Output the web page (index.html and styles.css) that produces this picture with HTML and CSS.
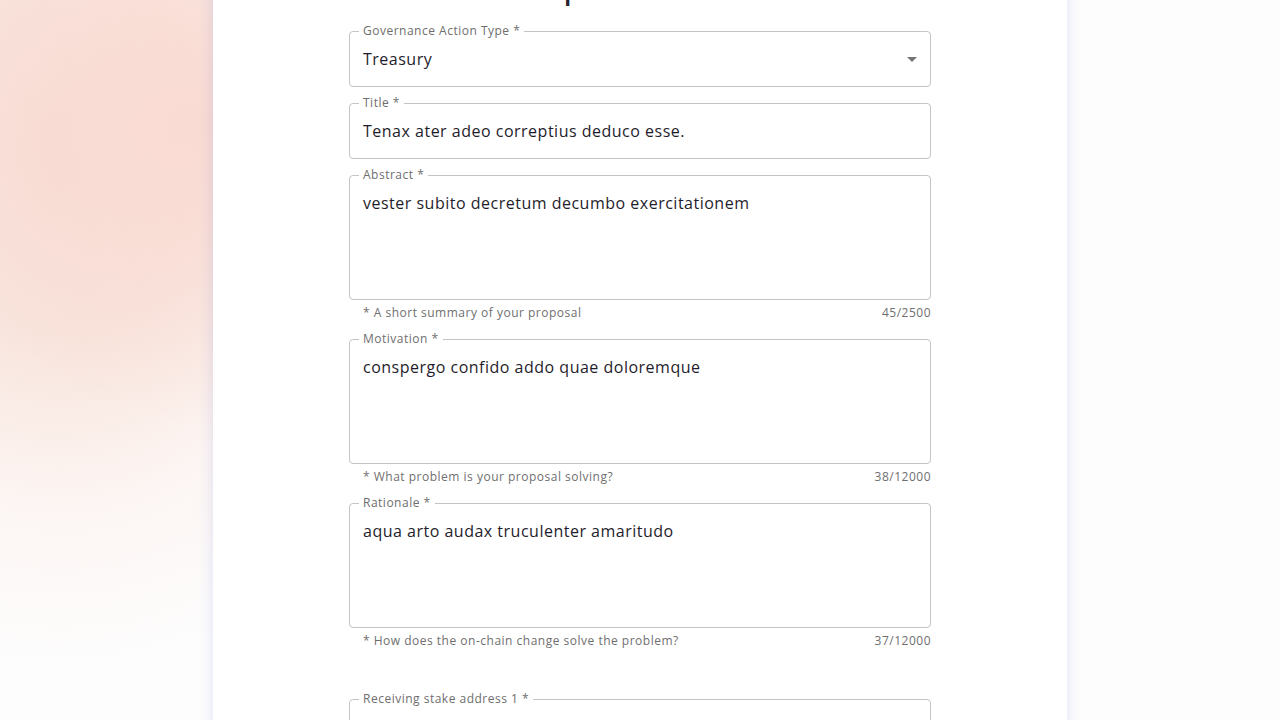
FILE: index.html
```html
<!DOCTYPE html>
<html lang="en">
<head>
<meta charset="utf-8">
<title>Proposal Details</title>
<link rel="stylesheet" href="styles.css">
</head>
<body>
<div class="page">
  <main class="card">
    <h2 class="heading">Proposal Details</h2>
    <form class="form">
      <div class="group">
        <div class="box box-select">
          <span class="label">Governance Action Type *</span>
          <span class="value">Treasury</span>
          <svg class="arrow" width="24" height="24" viewBox="0 0 24 24"><path d="M7 10l5 5 5-5z" fill="#757575"/></svg>
        </div>
      </div>
      <div class="group">
        <div class="box">
          <span class="label">Title *</span>
          <span class="value">Tenax ater adeo correptius deduco esse.</span>
        </div>
      </div>
      <div class="group">
        <div class="box box-area">
          <span class="label">Abstract *</span>
          <span class="value">vester subito decretum decumbo exercitationem</span>
        </div>
        <div class="helper"><span>* A short summary of your proposal</span><span>45/2500</span></div>
      </div>
      <div class="group">
        <div class="box box-area">
          <span class="label">Motivation *</span>
          <span class="value">conspergo confido addo quae doloremque</span>
        </div>
        <div class="helper"><span>* What problem is your proposal solving?</span><span>38/12000</span></div>
      </div>
      <div class="group">
        <div class="box box-area">
          <span class="label">Rationale *</span>
          <span class="value">aqua arto audax truculenter amaritudo</span>
        </div>
        <div class="helper"><span>* How does the on-chain change solve the problem?</span><span>37/12000</span></div>
      </div>
      <div class="group group-spaced">
        <div class="box">
          <span class="label">Receiving stake address 1 *</span>
          <span class="value"></span>
        </div>
      </div>
    </form>
  </main>
</div>
</body>
</html>
```

FILE: styles.css
```css
* { box-sizing: border-box; }
html, body { margin: 0; padding: 0; height: 100%; overflow: hidden; }
body {
  font-family: "Open Sans", "DejaVu Sans", sans-serif;
  color: #242232;
  background:
    radial-gradient(ellipse 260px 300px at 190px 125px, rgba(250, 218, 210, 0.9) 0%, rgba(250, 218, 210, 0) 100%),
    radial-gradient(ellipse 420px 520px at 60px 150px, #f7ddd5 0%, #f8e4dc 35%, rgba(252, 240, 236, 0.6) 68%, rgba(255, 255, 255, 0) 100%),
    #fdfdfd;
}
.page {
  display: flex;
  justify-content: center;
  width: 1280px;
}
.card {
  width: 854px;
  background: #ffffff;
  margin-top: -52px;
  height: 900px;
  padding: 20px 136px 0;
  box-shadow: 0 0 14px rgba(70, 90, 200, 0.16);
}
.heading {
  margin: 0;
  height: 40px;
  padding-right: 26px;
  text-align: center;
  font-size: 28px;
  font-weight: 600;
  line-height: 40px;
  color: #242232;
}
.form {
  margin-top: 23px;
  display: flex;
  flex-direction: column;
  gap: 16px;
}
.group { display: flex; flex-direction: column; }
.group-spaced { margin-top: 32px; }
.box {
  position: relative;
  height: 56px;
  border: 1px solid #c4c4c4;
  border-radius: 4px;
  padding: 0 13px;
  display: flex;
  align-items: center;
}
.box-area {
  height: 125px;
  align-items: flex-start;
  padding-top: 16px;
}
.label {
  position: absolute;
  top: -9px;
  left: 9px;
  padding: 0 4px;
  background: #ffffff;
  font-size: 12px;
  line-height: 16px;
  color: #6e6e6e;
  letter-spacing: 0.5px;
}
.value {
  font-size: 16px;
  line-height: 23px;
  color: #1f1d2b;
  letter-spacing: 0.5px;
}
.box-select .value { flex: 1; }
.arrow { margin-right: -7px; }
.helper {
  margin-top: 3px;
  padding-left: 14px;
  display: flex;
  justify-content: space-between;
  font-size: 12px;
  line-height: 20px;
  color: #6f6f6f;
  letter-spacing: 0.5px;
}
```
